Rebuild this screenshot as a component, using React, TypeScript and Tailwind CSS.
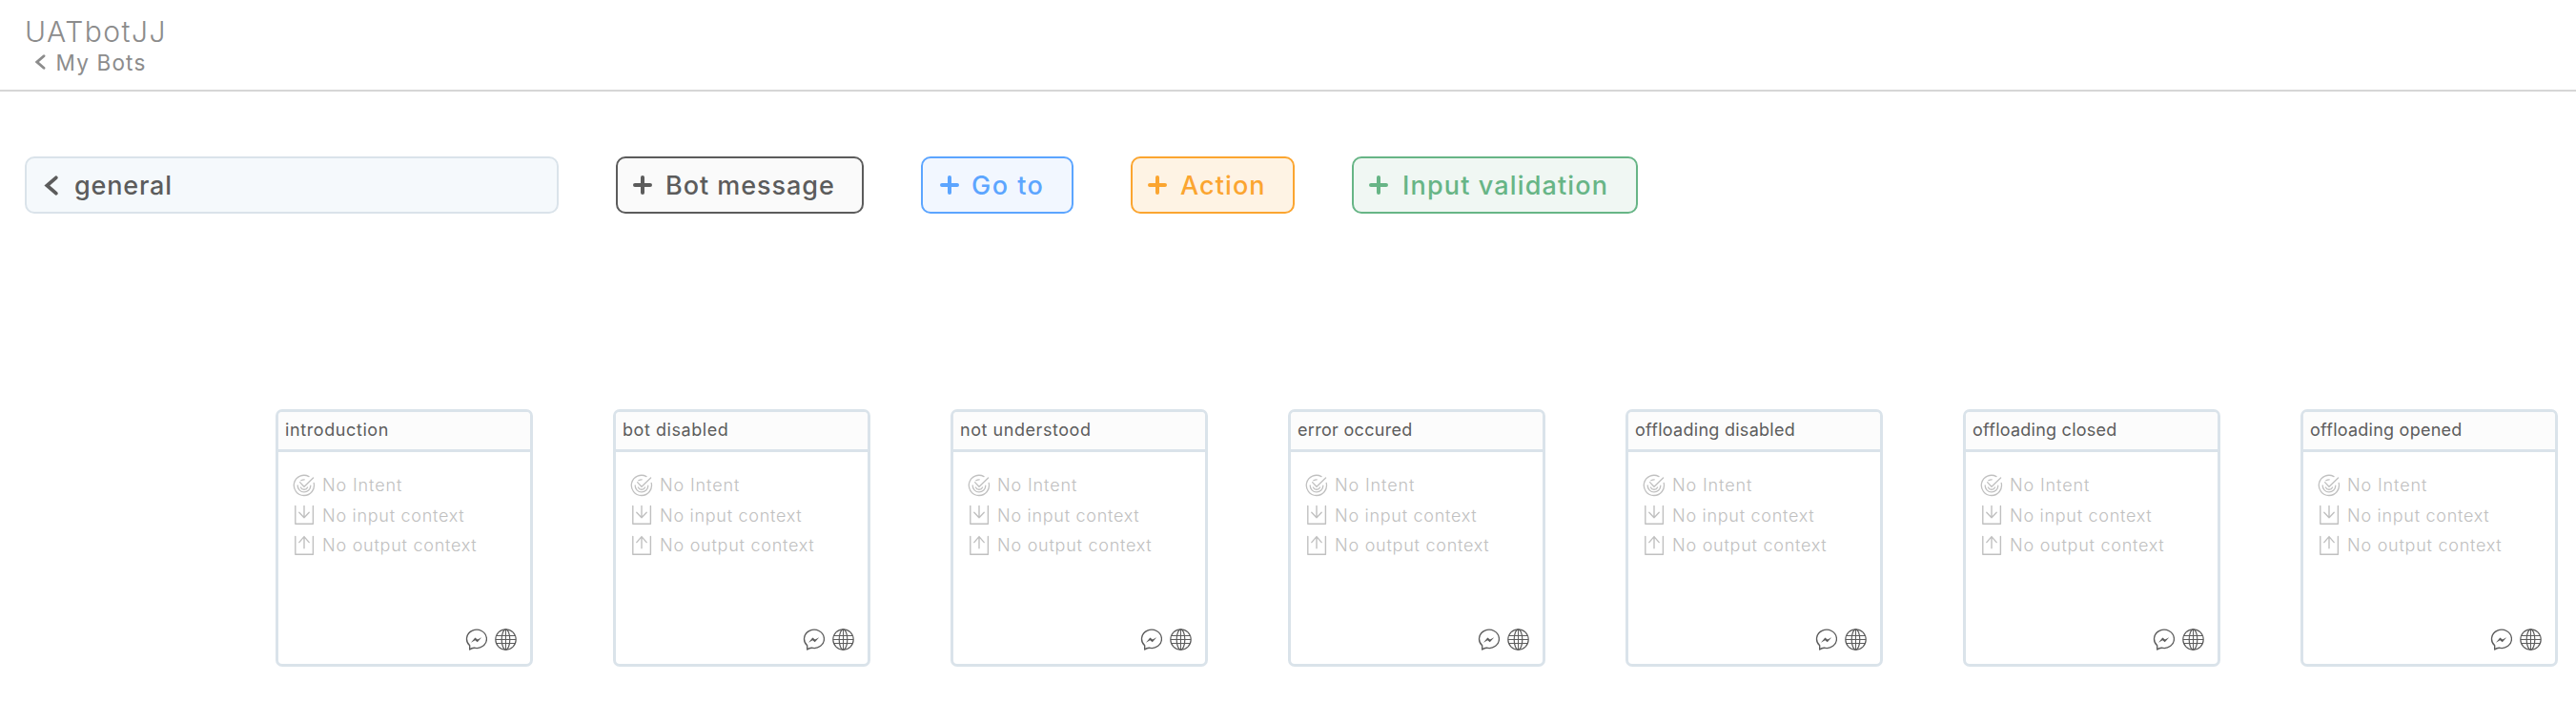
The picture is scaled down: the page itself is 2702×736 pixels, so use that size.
type Tool = { label: string; box: string; gap: string };

const tools: Tool[] = [
  { label: 'Bot message', box: 'ml-15 w-[260px] border-[#5c5c5c] bg-[#fafafa] pl-4 text-[#5c5c5c]', gap: 'ml-[14px] tracking-[0.95px]' },
  { label: 'Go to', box: 'ml-15 w-[160px] border-[#5ca5ff] bg-[#f2f7ff] pl-[18px] text-[#5ca5ff]', gap: 'ml-[13px] tracking-[1.5px]' },
  { label: 'Action', box: 'ml-15 w-[172px] border-[#fba530] bg-[#fef3e4] pl-4 text-[#fba530]', gap: 'ml-[14px] tracking-[1.1px]' },
  { label: 'Input validation', box: 'ml-15 w-[300px] border-[#67b586] bg-[#f0f7f3] pl-4 text-[#67b586]', gap: 'ml-[15px] tracking-[1.15px]' },
];

const cards = [
  { title: 'introduction', spacing: 'tracking-[0.6px]' },
  { title: 'bot disabled', spacing: 'tracking-[0.55px]' },
  { title: 'not understood', spacing: 'tracking-[0.55px]' },
  { title: 'error occured', spacing: 'tracking-[0.3px]' },
  { title: 'offloading disabled', spacing: 'tracking-[0.27px]' },
  { title: 'offloading closed', spacing: 'tracking-[0.24px]' },
  { title: 'offloading opened', spacing: 'tracking-[0.24px]' },
];

function Chevron({ className }: { className: string }) {
  return (
    <svg className={className} viewBox="0 0 14 20" fill="none" stroke="currentColor" strokeWidth="3.6" strokeLinecap="round" strokeLinejoin="miter">
      <path d="M12 2.2 3 10l9 7.8" />
    </svg>
  );
}

function Plus() {
  return (
    <svg className="size-5 shrink-0" viewBox="0 0 20 20" stroke="currentColor" strokeWidth="4" strokeLinecap="round">
      <path d="M10 2v16M2 10h16" />
    </svg>
  );
}

function TargetIcon() {
  return (
    <svg className="size-6" viewBox="0 0 24 24" fill="none" stroke="currentColor" strokeWidth="1.3" strokeLinecap="round" strokeLinejoin="round">
      <path d="M17 2.6A10.6 10.6 0 1 0 22.2 9.4" />
      <path d="M5.2 12a6.8 6.8 0 0 0 13.6.2" />
      <path d="M8.4 14a4 4 0 0 0 7.2 0" />
      <path d="M8.8 6.7c1-.6 2.1-.9 3.4-.9" />
      <path d="M7.6 8.6l4.4 4.7L21.6 4" />
    </svg>
  );
}

function InputIcon() {
  return (
    <svg className="size-6" viewBox="0 0 24 24" fill="none" stroke="currentColor" strokeWidth="1.4" strokeLinecap="round" strokeLinejoin="round">
      <path d="M2.8 2.5v18.7h18.6V2.5" />
      <path d="M12 2.5v12.2M6.8 9.3l5.2 5.4 5.2-5.4" />
    </svg>
  );
}

function OutputIcon() {
  return (
    <svg className="size-6" viewBox="0 0 24 24" fill="none" stroke="currentColor" strokeWidth="1.4" strokeLinecap="round" strokeLinejoin="round">
      <path d="M2.8 2.5v18.7h18.6V2.5" />
      <path d="M12 14.8V2.6M6.8 8.6 12 2.6l5.2 6" />
    </svg>
  );
}

function MessengerIcon() {
  return (
    <svg className="size-[23px]" viewBox="0 0 24 24" fill="none" stroke="currentColor" strokeWidth="1.4" strokeLinejoin="round">
      <path d="M4.9 23V18.6A10.9 10.1 0 1 1 9.6 21.1C7.8 21.2 6.300 21.900 4.900 23Z" />
      <path d="M6.2 15.3l4.6-5.4 2.7 2.2 4.500-2.500-4.700 5.300-2.500-2.200z" fill="currentColor" stroke="none" />
    </svg>
  );
}

function GlobeIcon() {
  return (
    <svg className="size-[23px]" viewBox="0 0 23 23" fill="none" stroke="currentColor" strokeWidth="1.2">
      <circle cx="11.5" cy="11.5" r="10.7" />
      <ellipse cx="11.5" cy="11.5" rx="4.3" ry="10.7" />
      <path d="M11.5 1v21M2 7.5h19M1 11.5h21M2 15.5h19" strokeWidth="1" />
    </svg>
  );
}

function Card({ title, spacing }: { title: string; spacing: string }) {
  return (
    <article className="flex size-[270px] shrink-0 flex-col overflow-hidden rounded-[7px] border-3 border-[#dae3ea] bg-white">
      <header className="flex h-[42px] items-center border-b-3 border-[#dae3ea] bg-[#fcfcfc] pb-[3px] pl-[7px] text-[18px] text-[#5c5c5c]">
        <span className={spacing}>{title}</span>
      </header>
      <ul className="mt-[19px] ml-[15px] text-[18px] font-[350] text-[#c0c0c0]">
        <li className="flex h-[31px] items-center gap-[7px]"><TargetIcon /><span className="tracking-[0.87px]">No Intent</span></li>
        <li className="flex h-[32px] items-center gap-[7px]"><InputIcon /><span className="tracking-[0.72px]">No input context</span></li>
        <li className="flex h-[31px] items-center gap-[7px]"><OutputIcon /><span className="tracking-[0.75px]">No output context</span></li>
      </ul>
      <footer className="mt-auto mr-[14px] mb-[14px] flex justify-end gap-2 text-[#5c5c5c]">
        <MessengerIcon />
        <GlobeIcon />
      </footer>
    </article>
  );
}

export default function App() {
  return (
    <div className="h-[736px] w-[2702px] overflow-hidden bg-white font-['Inter','Liberation_Sans',sans-serif]">
      <header className="h-24 border-b-2 border-[#d6d6d6] pt-[17px] pl-[26px] text-[#8c8c8c]">
        <h1 className="text-[30px] leading-[33px] font-[350] tracking-[1.5px]">UATbotJJ</h1>
        <a className="flex h-8 items-center pl-[10px] text-[22.5px] leading-7">
          <Chevron className="-mt-[3px] h-4 w-[12px]" />
          <span className="ml-[10.5px] font-[370] tracking-[1.2px]">My Bots</span>
        </a>
      </header>

      <nav className="mt-[68px] flex h-15 pl-[26px] text-[27px] font-medium">
        <div className="flex w-[560px] items-center rounded-[10px] border-2 border-[#dae3ea] bg-[#f5f9fc] pl-[18px] text-[#5c5c5c]">
          <Chevron className="h-[21px] w-[15px]" />
          <span className="ml-[17px] pt-0.5 tracking-[0.8px]">general</span>
        </div>
        {tools.map((t) => (
          <button key={t.label} className={`flex items-center rounded-[10px] border-2 ${t.box}`}>
            <Plus />
            <span className={`pt-0.5 ${t.gap}`}>{t.label}</span>
          </button>
        ))}
      </nav>

      <main className="mt-[205px] flex gap-[84px] pl-[289px]">
        {cards.map((c) => (
          <Card key={c.title} {...c} />
        ))}
      </main>
    </div>
  );
}
